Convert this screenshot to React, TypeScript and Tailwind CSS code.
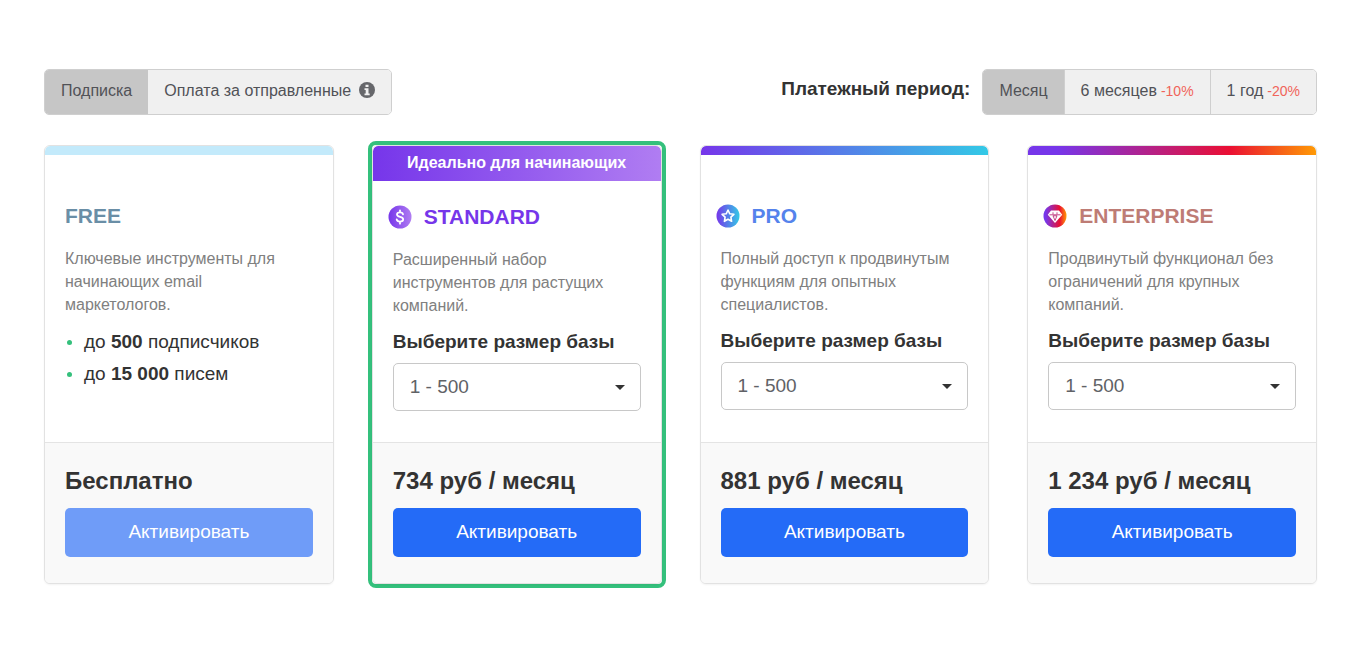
import React, { useState } from 'react';

interface Plan {
  id: string;
  name: string;
  nameClass: string;
  barClass: string;
  description: string;
  price: string;
  icon?: React.ReactNode;
  ribbon?: string;
  disabled?: boolean;
}

const StandardIcon = () => (
  <svg viewBox="0 0 24 24" className="size-6 shrink-0" aria-hidden="true">
    <defs>
      <linearGradient id="standard-fill">
        <stop offset="0" stopColor="#7636ea" />
        <stop offset="1" stopColor="#b07df2" />
      </linearGradient>
    </defs>
    <circle cx="12" cy="12" r="11.5" fill="url(#standard-fill)" />
    <path
      d="M15 9.3C14.8 8 13.7 7.4 12 7.4c-1.8 0-3 .8-3 2.2 0 3.2 6.2 1.5 6.2 4.7 0 1.5-1.3 2.3-3.2 2.3s-3.1-.8-3.3-2.2M12 5.3v2M12 16.7v2"
      fill="none"
      stroke="#fff"
      strokeWidth="1.8"
      strokeLinecap="round"
    />
  </svg>
);

const ProIcon = () => (
  <svg viewBox="0 0 24 24" className="size-6 shrink-0" aria-hidden="true">
    <defs>
      <linearGradient id="pro-fill">
        <stop offset="0" stopColor="#7636ea" />
        <stop offset="1" stopColor="#33c9e6" />
      </linearGradient>
    </defs>
    <circle cx="12" cy="12" r="11.5" fill="url(#pro-fill)" />
    <path
      d="M12 6l1.8 3.8 4.1.5-3 2.9.7 4.1-3.6-2-3.6 2 .7-4.1-3-2.9 4.1-.5z"
      fill="none"
      stroke="#fff"
      strokeWidth="1.6"
      strokeLinejoin="round"
    />
  </svg>
);

const EnterpriseIcon = () => (
  <svg viewBox="0 0 24 24" className="size-6 shrink-0" aria-hidden="true">
    <defs>
      <linearGradient id="enterprise-fill">
        <stop offset="0.1" stopColor="#7636ea" />
        <stop offset="0.7" stopColor="#ea0f33" />
        <stop offset="1" stopColor="#ff9a05" />
      </linearGradient>
    </defs>
    <circle cx="12" cy="12" r="11.5" fill="url(#enterprise-fill)" />
    <path d="M8 6.5h8l3.2 4.2L12 19l-7.200-8.300z" fill="#fff" />
    <path
      d="M6.500 10.800h11M10 11.800l2 4.700 2-4.700zM10 8.300v2M14 8.300v2"
      fill="none"
      stroke="#b51c6b"
      strokeWidth="0.8"
    />
  </svg>
);

const plans: Plan[] = [
  {
    id: 'free',
    name: 'FREE',
    nameClass: 'text-[#6a8ea6]',
    barClass: 'bg-[#c3eafb]',
    description: 'Ключевые инструменты для начинающих email маркетологов.',
    price: 'Бесплатно',
    disabled: true,
  },
  {
    id: 'standard',
    name: 'STANDARD',
    nameClass: 'text-[#7636ea]',
    barClass: 'bg-linear-to-r/srgb from-[#7636ea] to-[#b07df2]',
    description: 'Расширенный набор инструментов для растущих компаний.',
    price: '734 руб / месяц',
    icon: <StandardIcon />,
    ribbon: 'Идеально для начинающих',
  },
  {
    id: 'pro',
    name: 'PRO',
    nameClass: 'text-[#5583ec]',
    barClass: 'bg-linear-to-r/srgb from-[#7636ea] to-[#33c9e6]',
    description: 'Полный доступ к продвинутым функциям для опытных специалистов.',
    price: '881 руб / месяц',
    icon: <ProIcon />,
  },
  {
    id: 'enterprise',
    name: 'ENTERPRISE',
    nameClass: 'text-[#be7c75]',
    barClass: 'bg-linear-to-r/srgb from-[#7636ea] from-10% via-[#ea0f33] via-70% to-[#ff9a05]',
    description: 'Продвинутый функционал без ограничений для крупных компаний.',
    price: '1 234 руб / месяц',
    icon: <EnterpriseIcon />,
  },
];

const periods = [
  { id: 'month', label: 'Месяц', discount: '' },
  { id: 'half', label: '6 месяцев', discount: '-10%' },
  { id: 'year', label: '1 год', discount: '-20%' },
];

const InfoIcon = () => (
  <svg viewBox="0 0 16 16" className="mb-0.5 ml-2 size-4" aria-hidden="true">
    <circle cx="8" cy="8" r="8" fill="#66676b" />
    <path d="M6.5 2.7h3v2.2h-3zM5.5 6.3h4v5.2h1.2v1.7H5.5v-1.7h1.2V8H5.5z" fill="#f0f0f0" />
  </svg>
);

const tabClass = (active: boolean) =>
  active ? 'flex items-center px-4 pb-0.5 bg-[#c6c6c6]' : 'flex items-center px-4 pb-0.5 bg-[#f0f0f0]';

const PlanCard = ({ plan }: { plan: Plan }) => {
  const [size, setSize] = useState('500');

  const card = (
    <article className="flex h-full flex-col overflow-hidden rounded-md border border-[#e2e2e2] bg-white shadow-xs">
      {plan.ribbon ? (
        <div className={`h-[35px] rounded-t-[5px] text-center text-base leading-[34px] font-bold text-white ${plan.barClass}`}>
          {plan.ribbon}
        </div>
      ) : (
        <div className={`h-[9px] rounded-t-[5px] ${plan.barClass}`} />
      )}

      <div className={`flex grow flex-col px-5 pb-[31px] ${plan.ribbon ? 'pt-6' : 'pt-[49px]'}`}>
        <h2 className={`flex h-6 items-center gap-3 text-[21px] font-bold ${plan.nameClass} ${plan.icon ? '-ml-[5px]' : ''}`}>
          {plan.icon}
          {plan.name}
        </h2>
        <p className="mt-[19px] pr-2 text-base leading-[23px] text-[#808080]">{plan.description}</p>

        {plan.id === 'free' ? (
          <ul className="mt-2.5 text-[19px] leading-8">
            <li className="flex items-center gap-3">
              <span className="ml-0.5 size-[5px] rounded-full bg-[#34c07c]" />
              <span>до <b>500</b> подписчиков</span>
            </li>
            <li className="flex items-center gap-3">
              <span className="ml-0.5 size-[5px] rounded-full bg-[#34c07c]" />
              <span>до <b>15 000</b> писем</span>
            </li>
          </ul>
        ) : (
          <>
            <label htmlFor={`size-${plan.id}`} className="mt-3 text-[19px] leading-[26px] font-bold">
              Выберите размер базы
            </label>
            <div className="relative mt-2">
              <select
                id={`size-${plan.id}`}
                value={size}
                onChange={(e) => setSize(e.target.value)}
                className="h-12 w-full appearance-none rounded-[5px] border border-[#c8c8c8] bg-white px-4 text-[19px] text-[#606266]"
              >
                <option value="500">1 - 500</option>
                <option value="1000">501 - 1000</option>
              </select>
              <span className="pointer-events-none absolute top-[22px] right-4 border-x-5 border-t-5 border-x-transparent border-t-[#333]" />
            </div>
          </>
        )}
      </div>

      <div className="border-t border-[#e4e4e4] bg-[#f9f9f9] px-5 pt-[22px] pb-[26px]">
        <div className="text-2xl font-bold">{plan.price}</div>
        <button
          disabled={plan.disabled}
          className="mt-[11px] h-[49px] w-full rounded-[5px] bg-[#246bf7] text-[19px] text-white disabled:bg-[#6f9cf8]"
        >
          Активировать
        </button>
      </div>
    </article>
  );

  return plan.ribbon ? (
    <div className="-m-1 rounded-lg border-4 border-[#34c07c]">{card}</div>
  ) : (
    card
  );
};

const App: React.FC = () => {
  const [mode, setMode] = useState('subscription');
  const [period, setPeriod] = useState('month');

  return (
    <main className="min-h-screen bg-white pt-[69px] pr-[43px] pb-16 pl-11 font-['Liberation_Sans',Arial,sans-serif] text-[#333]">
      <div className="flex items-start justify-between">
        <div className="flex h-[46px] overflow-hidden rounded-[5px] border border-[#cfcfcf] text-base text-[#515257]">
          <button className={tabClass(mode === 'subscription')} onClick={() => setMode('subscription')}>
            Подписка
          </button>
          <button className={tabClass(mode === 'sent')} onClick={() => setMode('sent')}>
            Оплата за отправленные
            <InfoIcon />
          </button>
        </div>

        <div className="flex items-start gap-3">
          <span className="mt-1.5 text-[19px] font-bold">Платежный период:</span>
          <div className="flex h-[46px] divide-x divide-[#cfcfcf] overflow-hidden rounded-[5px] border border-[#cfcfcf] text-base text-[#515257]">
            {periods.map((p) => (
              <button key={p.id} className={tabClass(period === p.id)} onClick={() => setPeriod(p.id)}>
                {p.label}
                {p.discount && <span className="ml-1 text-sm text-[#f0645a]">{p.discount}</span>}
              </button>
            ))}
          </div>
        </div>
      </div>

      <div className="mt-[30px] grid grid-cols-4 gap-[38px]">
        {plans.map((plan) => (
          <PlanCard key={plan.id} plan={plan} />
        ))}
      </div>
    </main>
  );
};

export default App;
